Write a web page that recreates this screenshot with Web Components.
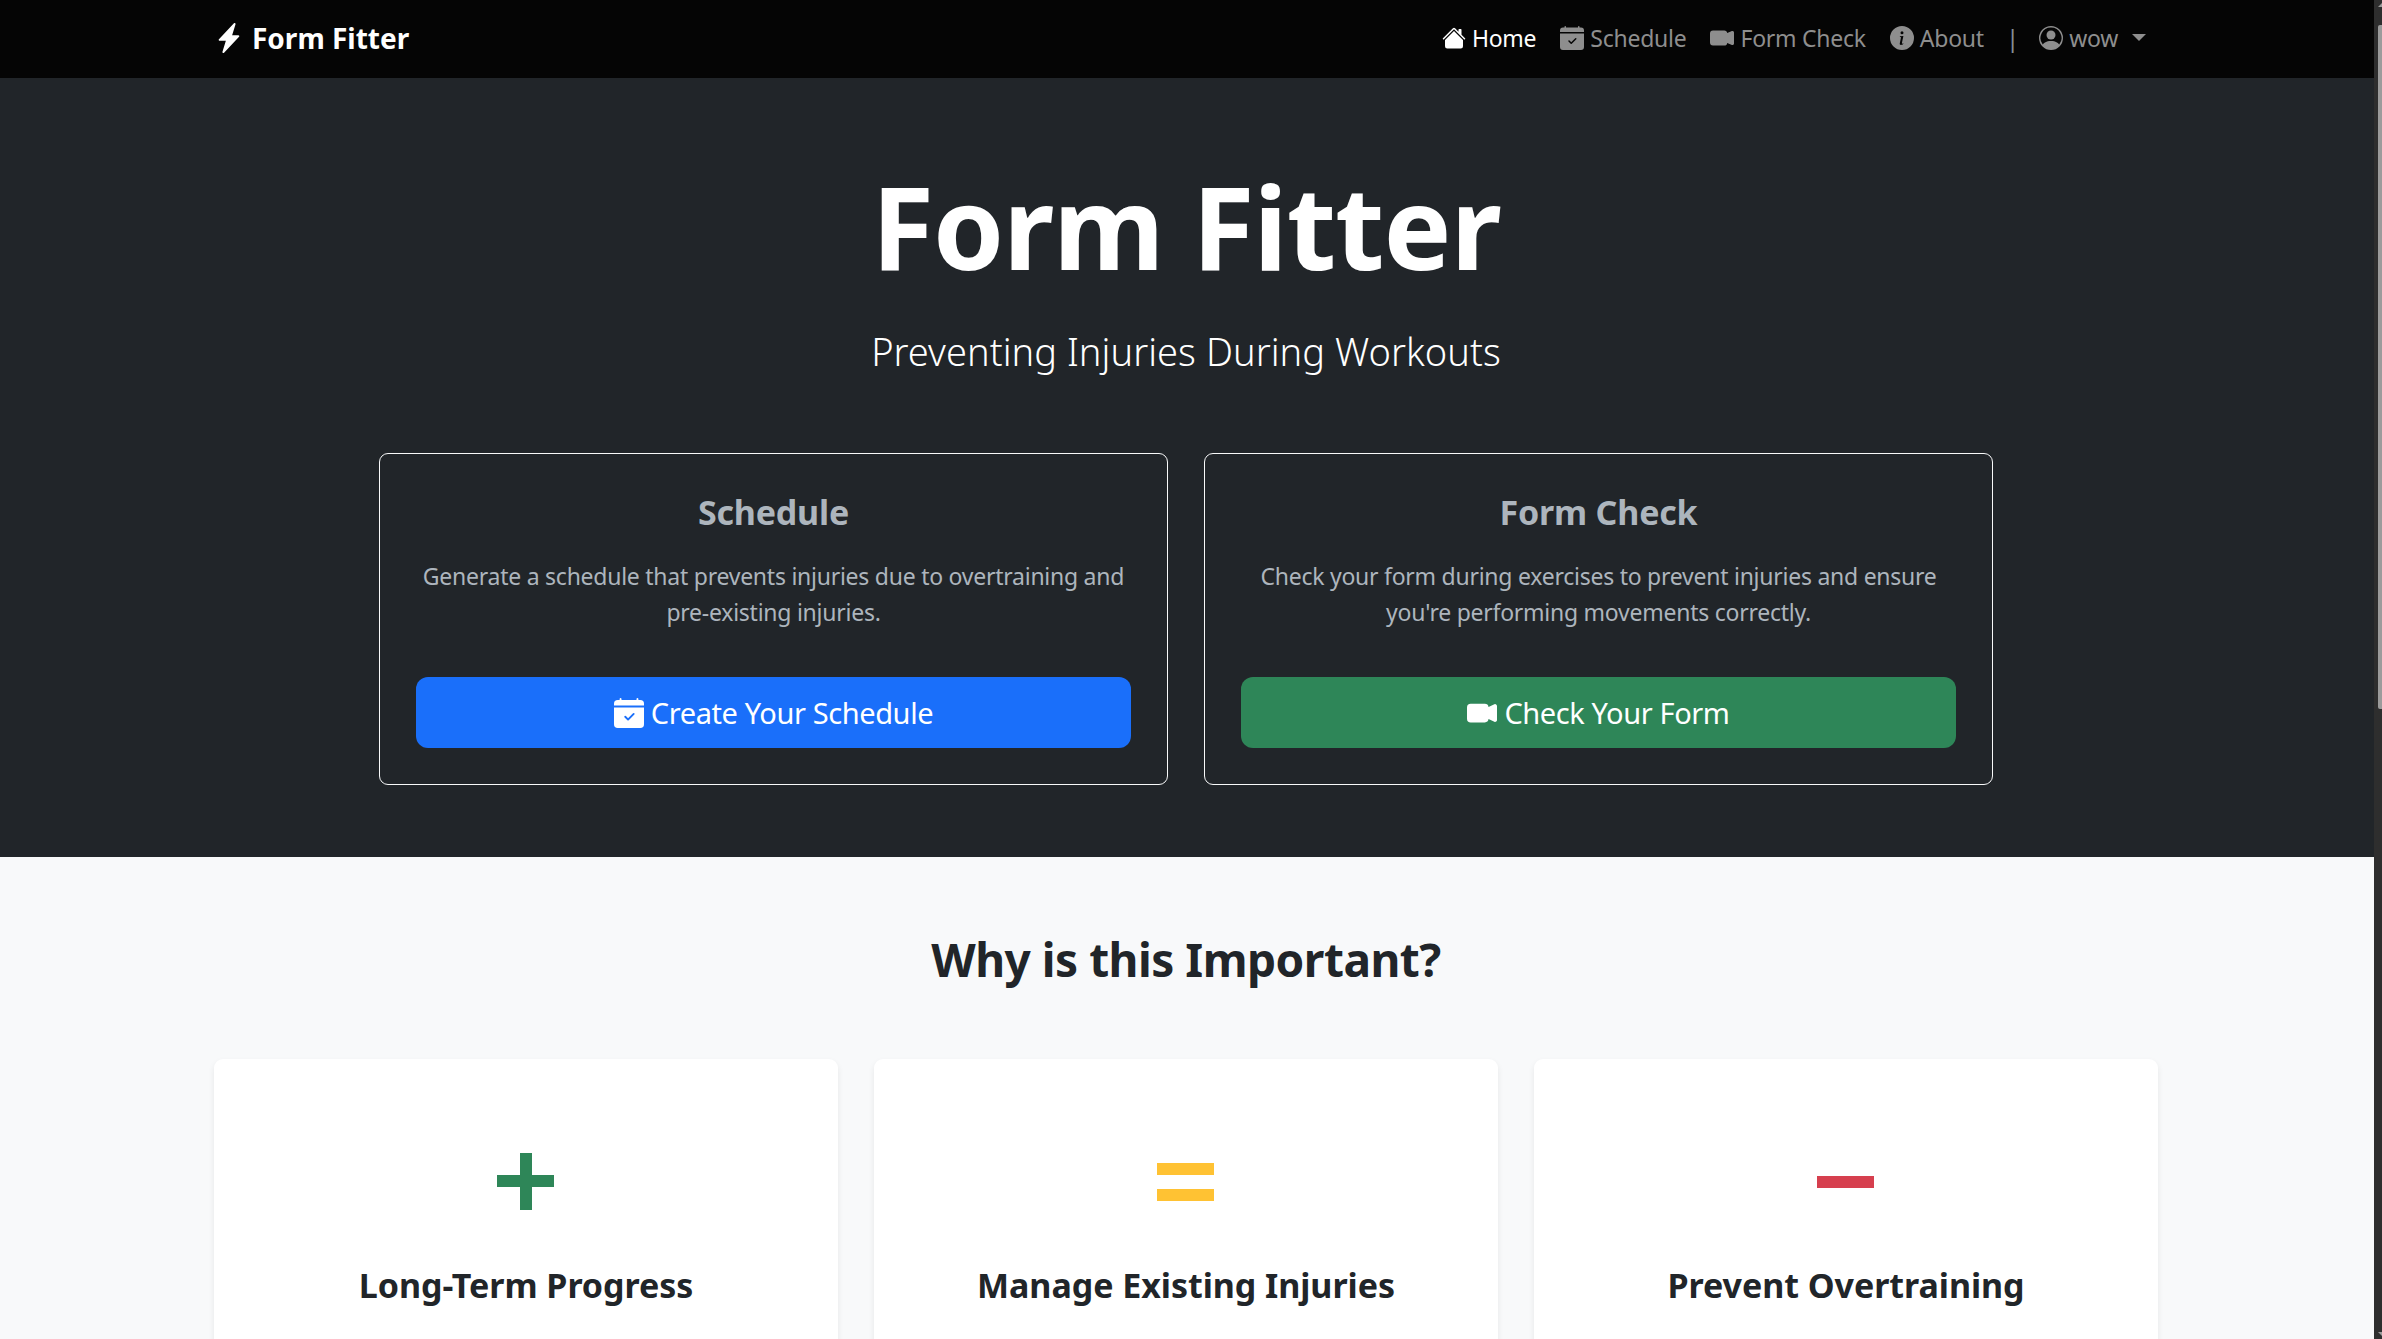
<!DOCTYPE html>
<html lang="en">
<head>
<meta charset="utf-8">
<title>Form Fitter</title>
<style>
  html, body { margin: 0; height: 100%; overflow: hidden; }
  body { font-family: "Noto Sans", "Open Sans", sans-serif; color: #212529; background: #f8f9fa; }
</style>
</head>
<body>
<ff-page>
  <ff-navbar slot="nav"></ff-navbar>
  <ff-hero slot="hero"></ff-hero>
  <ff-why slot="why"></ff-why>
</ff-page>

<script>
const FONT = '"Noto Sans", "Open Sans", sans-serif';

const icons = {
  bolt: `<svg viewBox="0 0 16 16" fill="currentColor"><path d="M11.251.068a.5.5 0 0 1 .227.58L9.677 6.5H13a.5.5 0 0 1 .364.843l-8 8.5a.5.5 0 0 1-.842-.49L6.323 9.5H3a.5.5 0 0 1-.364-.843l8-8.5a.5.5 0 0 1 .615-.09z"/></svg>`,
  house: `<svg viewBox="0 0 16 16" fill="currentColor"><path d="M8.707 1.5a1 1 0 0 0-1.414 0L.646 8.146a.5.5 0 0 0 .708.708L8 2.207l6.646 6.647a.5.5 0 0 0 .708-.708L13 5.793V2.500a.5.5 0 0 0-.5-.5h-1a.5.5 0 0 0-.5.5v1.293L8.707 1.500Z"/><path d="m8 3.293 6 6V13.500a1.500 1.500 0 0 1-1.500 1.500h-9A1.500 1.500 0 0 1 2 13.500V9.293l6-6Z"/></svg>`,
  calendar: `<svg viewBox="0 0 16 16" fill="currentColor"><path d="M4 .5a.5.5 0 0 0-1 0V1H2a2 2 0 0 0-2 2v1h16V3a2 2 0 0 0-2-2h-1V.5a.5.5 0 0 0-1 0V1H4V.5zM16 14V5H0v9a2 2 0 0 0 2 2h12a2 2 0 0 0 2-2zm-5.146-5.146-3 3a.5.5 0 0 1-.708 0l-1.500-1.500a.5.5 0 0 1 .708-.708L7.500 10.793l2.646-2.647a.5.5 0 0 1 .708.708z"/></svg>`,
  video: `<svg viewBox="0 0 16 16" fill="currentColor"><path fill-rule="evenodd" d="M0 5a2 2 0 0 1 2-2h7.500a2 2 0 0 1 1.983 1.738l3.110-1.382A1 1 0 0 1 16 4.269v7.462a1 1 0 0 1-1.406.913l-3.111-1.382A2 2 0 0 1 9.500 13H2a2 2 0 0 1-2-2V5z"/></svg>`,
  info: `<svg viewBox="0 0 16 16" fill="currentColor"><path d="M8 16A8 8 0 1 0 8 0a8 8 0 0 0 0 16zm.93-9.412-1 4.705c-.07.340.029.533.304.533.194 0 .487-.070.686-.246l-.088.416c-.287.346-.920.598-1.465.598-.703 0-1.002-.422-.808-1.319l.738-3.468c.064-.293.006-.399-.287-.470l-.451-.081.082-.381 2.290-.287zM8 5.500a1 1 0 1 1 0-2 1 1 0 0 1 0 2z"/></svg>`,
  user: `<svg viewBox="0 0 16 16" fill="currentColor"><path d="M11 6a3 3 0 1 1-6 0 3 3 0 0 1 6 0z"/><path fill-rule="evenodd" d="M0 8a8 8 0 1 1 16 0A8 8 0 0 1 0 8zm8-7a7 7 0 0 0-5.468 11.370C3.242 11.226 4.805 10 8 10s4.757 1.225 5.468 2.370A7 7 0 0 0 8 1z"/></svg>`
};

class FfIcon extends HTMLElement {
  constructor() {
    super();
    this.attachShadow({ mode: "open" });
    const size = this.getAttribute("size") || "24";
    this.shadowRoot.innerHTML = `
      <style>
        :host { display: inline-flex; width: ${size}px; height: ${size}px; flex: none; }
        svg { width: 100%; height: 100%; display: block; }
      </style>
      ${icons[this.getAttribute("name")] || ""}`;
  }
}
customElements.define("ff-icon", FfIcon);

class FfPage extends HTMLElement {
  constructor() {
    super();
    this.attachShadow({ mode: "open" });
    this.shadowRoot.innerHTML = `
      <style>
        :host { display: grid; grid-template-columns: 1fr 8px; height: 1339px; overflow: hidden; font-family: ${FONT}; }
        .main { min-width: 0; overflow: hidden; }
        .bar { background: #2e2e2e; position: relative; }
        .thumb { position: absolute; top: 25px; left: 4px; right: 0; height: 684px; background: #9b9b9b; border-radius: 2px 0 0 2px; }
        .up, .down { position: absolute; right: 0; width: 0; height: 0; border-left: 4px solid transparent; border-right: 0; }
        .up { top: 3px; border-bottom: 4px solid #9b9b9b; }
        .down { bottom: 3px; border-top: 4px solid #9b9b9b; }
      </style>
      <div class="main">
        <slot name="nav"></slot>
        <slot name="hero"></slot>
        <slot name="why"></slot>
      </div>
      <div class="bar"><div class="up"></div><div class="thumb"></div><div class="down"></div></div>`;
  }
}
customElements.define("ff-page", FfPage);

class FfNavLink extends HTMLElement {
  constructor() {
    super();
    this.attachShadow({ mode: "open" });
    this.shadowRoot.innerHTML = `
      <style>
        :host { display: inline-flex; align-items: center; gap: 6px; color: #8e8e8e; font-size: 23px; letter-spacing: -.25px; padding: 0 12px; white-space: nowrap; }
        :host([active]) { color: #fff; }
      </style>
      <ff-icon name="${this.getAttribute("icon")}" size="24"></ff-icon><slot></slot>`;
  }
}
customElements.define("ff-nav-link", FfNavLink);

class FfNavbar extends HTMLElement {
  constructor() {
    super();
    this.attachShadow({ mode: "open" });
    this.shadowRoot.innerHTML = `
      <style>
        :host { display: block; background: #050505; height: 78px; padding-right: 2px; box-sizing: border-box; }
        .inner { height: 100%; box-sizing: border-box; width: 1980px; margin: 0 auto; padding: 0 18px 3px; display: flex; align-items: center; justify-content: space-between; }
        .brand { display: flex; align-items: center; gap: 8px; color: #fff; font-size: 28px; font-weight: 700; }
        .links { display: flex; align-items: center; }
        .sep { color: #868e96; font-size: 24px; padding: 0 8px 0 10px; }
        .caret { width: 0; height: 0; border: 7px solid transparent; border-top-color: #8e8e8e; border-bottom: 0; margin-left: 8px; }
      </style>
      <div class="inner">
        <div class="brand"><ff-icon name="bolt" size="30"></ff-icon><span>Form Fitter</span></div>
        <div class="links">
          <ff-nav-link icon="house" active>Home</ff-nav-link>
          <ff-nav-link icon="calendar">Schedule</ff-nav-link>
          <ff-nav-link icon="video">Form Check</ff-nav-link>
          <ff-nav-link icon="info">About</ff-nav-link>
          <span class="sep">|</span>
          <ff-nav-link icon="user">wow<span class="caret"></span></ff-nav-link>
        </div>
      </div>`;
  }
}
customElements.define("ff-navbar", FfNavbar);

class FfAction extends HTMLElement {
  constructor() {
    super();
    this.attachShadow({ mode: "open" });
    this.shadowRoot.innerHTML = `
      <style>
        :host { display: flex; flex-direction: column; align-items: stretch; box-sizing: border-box; border: 1px solid #f8f9fa; border-radius: 9px; padding: 36px; height: 332px; text-align: center; min-width: 0; }
        h3 { margin: 1px 0 24px; font-size: 34px; line-height: 43px; font-weight: 700; letter-spacing: -.2px; color: #adb5bd; }
        p { margin: 0; font-size: 23px; line-height: 36px; letter-spacing: -.25px; color: #adb5bd; flex: 1; }
        .btn { display: flex; align-items: center; justify-content: center; gap: 7px; height: 71px; border-radius: 12px; background: var(--btn); color: #fff; font-size: 29px; letter-spacing: -.4px; }
      </style>
      <h3><slot name="title"></slot></h3>
      <p><slot name="text"></slot></p>
      <div class="btn"><ff-icon name="${this.getAttribute("icon")}" size="30"></ff-icon><slot name="label"></slot></div>`;
  }
}
customElements.define("ff-action", FfAction);

class FfHero extends HTMLElement {
  constructor() {
    super();
    this.attachShadow({ mode: "open" });
    this.shadowRoot.innerHTML = `
      <style>
        :host { display: block; background: #212529; color: #fff; height: 779px; box-sizing: border-box; padding: 72px 2px 0 0; text-align: center; }
        h1 { margin: 0 0 31px; padding-top: 4px; font-size: 114px; line-height: 144px; font-weight: 700; letter-spacing: -1px; }
        .lead { margin: 0 0 79px; font-size: 38px; line-height: 45px; font-weight: 300; letter-spacing: .05px; }
        .row { width: 1614px; margin: 0 auto; display: grid; grid-template-columns: 1fr 1fr; gap: 36px; }
      </style>
      <h1>Form Fitter</h1>
      <p class="lead">Preventing Injuries During Workouts</p>
      <div class="row">
        <ff-action icon="calendar" style="--btn:#1a6ffa">
          <span slot="title">Schedule</span>
          <span slot="text">Generate a schedule that prevents injuries due to overtraining and pre-existing injuries.</span>
          <span slot="label">Create Your Schedule</span>
        </ff-action>
        <ff-action icon="video" style="--btn:#2e8658">
          <span slot="title">Form Check</span>
          <span slot="text">Check your form during exercises to prevent injuries and ensure you're performing movements correctly.</span>
          <span slot="label">Check Your Form</span>
        </ff-action>
      </div>`;
  }
}
customElements.define("ff-hero", FfHero);

class FfReason extends HTMLElement {
  constructor() {
    super();
    this.attachShadow({ mode: "open" });
    this.shadowRoot.innerHTML = `
      <style>
        :host { display: flex; flex-direction: column; align-items: center; background: #fff; border-radius: 9px; box-shadow: 0 3px 6px rgba(0,0,0,.075); height: 400px; padding-top: 94px; box-sizing: border-box; min-width: 0; }
        .mark { position: relative; width: 57px; height: 57px; margin-right: 1px; color: var(--c); }
        .mark i { position: absolute; background: currentColor; }
        .h { left: 0; right: 0; height: 12px; }
        .v { top: 0; bottom: 0; width: 12px; left: 22.500px; }
        h4 { margin: 54px 0 0; font-size: 34px; line-height: 43px; font-weight: 700; letter-spacing: -.05px; color: #212529; }
      </style>
      <div class="mark">${{
        plus: '<i class="h" style="top:22px"></i><i class="v"></i>',
        equals: '<i class="h" style="top:10px"></i><i class="h" style="top:36px"></i>',
        minus: '<i class="h" style="top:23px"></i>'
      }[this.getAttribute("mark")]}</div>
      <h4><slot></slot></h4>`;
  }
}
customElements.define("ff-reason", FfReason);

class FfWhy extends HTMLElement {
  constructor() {
    super();
    this.attachShadow({ mode: "open" });
    this.shadowRoot.innerHTML = `
      <style>
        :host { display: block; background: #f8f9fa; padding: 72px 2px 0 0; text-align: center; }
        h2 { margin: 0 0 72px; padding-top: 1px; height: 57px; font-size: 46px; line-height: 58px; font-weight: 700; letter-spacing: -.5px; color: #212529; }
        .row { width: 1944px; margin: 0 auto; display: grid; grid-template-columns: repeat(3, 1fr); gap: 36px; }
      </style>
      <h2>Why is this Important?</h2>
      <div class="row">
        <ff-reason mark="plus" style="--c:#2e8658">Long-Term Progress</ff-reason>
        <ff-reason mark="equals" style="--c:#ffc233">Manage Existing Injuries</ff-reason>
        <ff-reason mark="minus" style="--c:#d63f4e">Prevent Overtraining</ff-reason>
      </div>`;
  }
}
customElements.define("ff-why", FfWhy);
</script>
</body>
</html>
